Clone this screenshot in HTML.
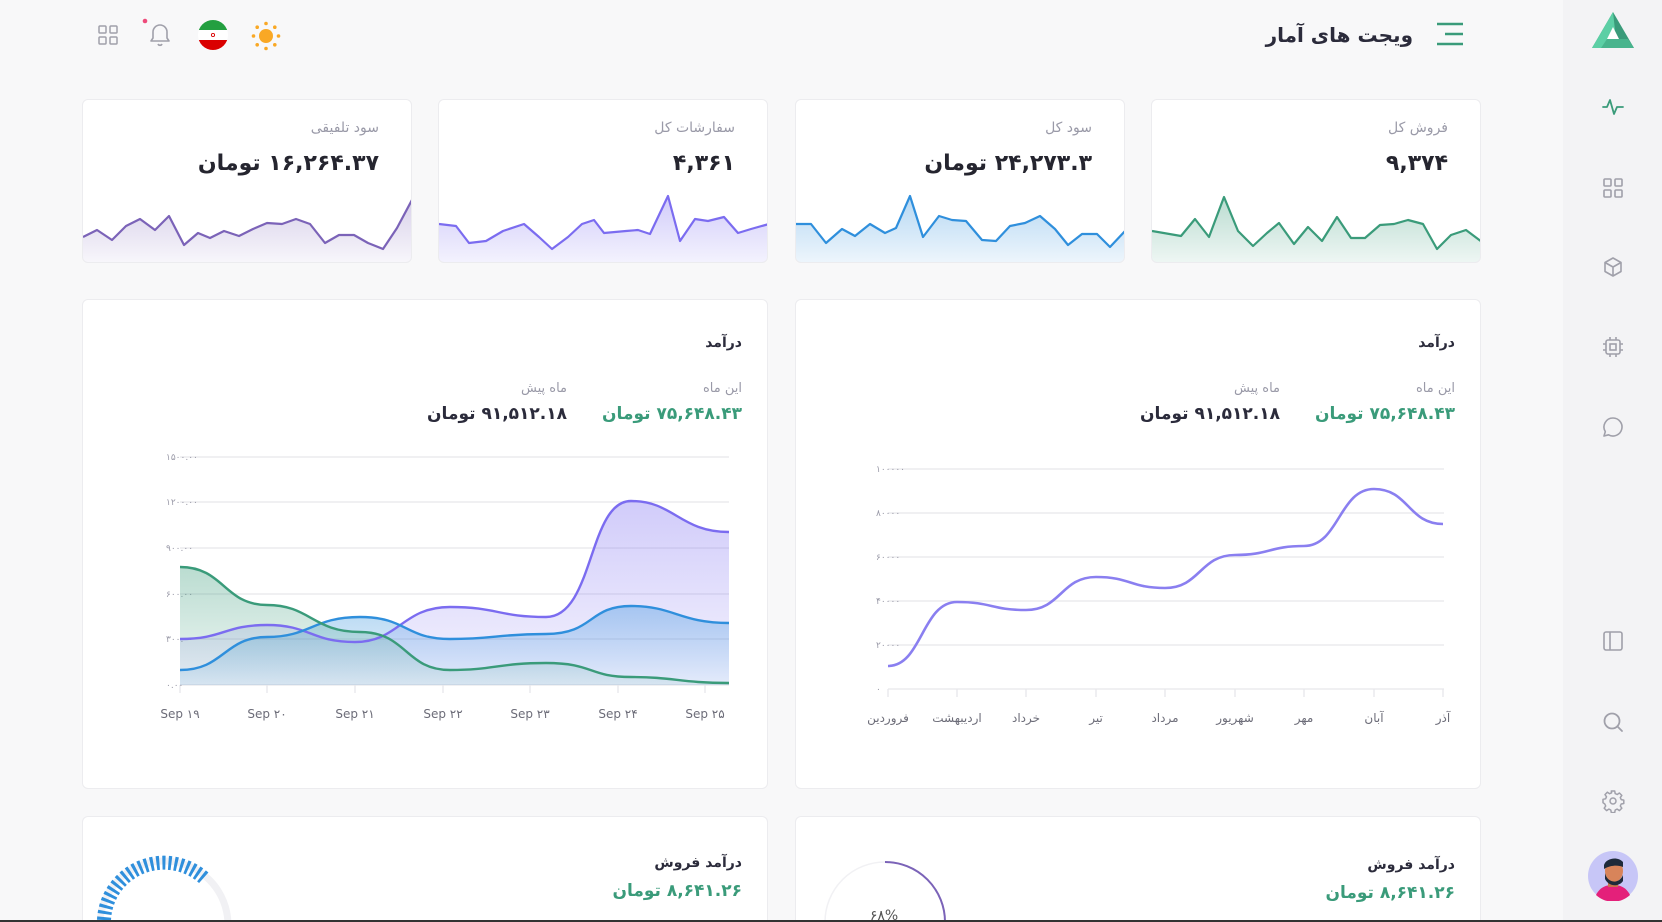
<!DOCTYPE html>
<html><head><meta charset="utf-8">
<style>
*{margin:0;padding:0;box-sizing:border-box}
html{width:1662px;height:922px;overflow:hidden}
body{width:1662px;height:922px;overflow:hidden;background:#f8f8f9;font-family:"DejaVu Sans","Liberation Sans",sans-serif;position:relative;color:#2b2b3b}
.a{position:absolute}
.t{direction:rtl;white-space:nowrap;position:absolute}
.card{position:absolute;background:#fff;border:1px solid #ececef;border-radius:6px;overflow:hidden}
.side{position:absolute;left:1563px;top:0;width:99px;height:922px;background:#f3f3f5}
.g{color:#9a9aa8;font-size:13px}
.v{font-size:22px;font-weight:bold;color:#25252f}
.gr{color:#3a9b7a}
</style></head><body>

<div class="side"></div>
<svg class="a" style="left:1591px;top:10px" width="44" height="40" viewBox="0 0 44 40">
<polygon points="22,2 43,38 1,38" fill="#3a9b7a"/>
<polygon points="22,2 1,38 14,38 24,20" fill="#5ccfa5"/>
<polygon points="10,38 43,38 37,29 16,29" fill="#48b48d"/>
<polygon points="22,17 28,29 16,29" fill="#fff"/>
</svg>
<svg class="a" style="left:1601px;top:95px" width="24" height="24" viewBox="0 0 24 24" fill="none" stroke="#3a9b7a" stroke-width="1.8" stroke-linecap="round" stroke-linejoin="round"><path d="M2 12h4l3-7 4 14 3-7h6"/></svg>
<svg class="a" style="left:1602px;top:177px" width="22" height="22" viewBox="0 0 22 22" fill="none" stroke="#a0a0aa" stroke-width="1.6"><rect x="2" y="2" width="7" height="7" rx="1"/><rect x="13" y="2" width="7" height="7" rx="1"/><rect x="2" y="13" width="7" height="7" rx="1"/><rect x="13" y="13" width="7" height="7" rx="1"/></svg>
<svg class="a" style="left:1602px;top:256px" width="22" height="22" viewBox="0 0 22 22" fill="none" stroke="#a0a0aa" stroke-width="1.6" stroke-linejoin="round"><path d="M11 2l8 4.5v9L11 20l-8-4.5v-9z M3 6.5l8 4.5 8-4.5 M11 11v9"/></svg>
<svg class="a" style="left:1601px;top:335px" width="24" height="24" viewBox="0 0 24 24" fill="none" stroke="#a0a0aa" stroke-width="1.6"><rect x="5" y="5" width="14" height="14" rx="2"/><rect x="9" y="9" width="6" height="6"/><path d="M9 2v3M15 2v3M9 19v3M15 19v3M2 9h3M2 15h3M19 9h3M19 15h3"/></svg>
<svg class="a" style="left:1602px;top:416px" width="22" height="22" viewBox="0 0 22 22" fill="none" stroke="#a0a0aa" stroke-width="1.6" stroke-linejoin="round"><path d="M11 2a9 9 0 1 1-4.5 16.8L2 20l1.3-4.3A9 9 0 0 1 11 2z"/></svg>
<svg class="a" style="left:1602px;top:630px" width="22" height="22" viewBox="0 0 22 22" fill="none" stroke="#a0a0aa" stroke-width="1.6"><rect x="2" y="2" width="18" height="18" rx="2"/><path d="M8 2v18"/></svg>
<svg class="a" style="left:1602px;top:711px" width="22" height="22" viewBox="0 0 22 22" fill="none" stroke="#a0a0aa" stroke-width="1.8" stroke-linecap="round"><circle cx="10" cy="10" r="7.5"/><path d="M15.5 15.5L20 20"/></svg>
<svg class="a" style="left:1601px;top:789px" width="24" height="24" viewBox="0 0 24 24" fill="none" stroke="#a0a0aa" stroke-width="1.5" stroke-linejoin="round"><circle cx="12" cy="12" r="3"/><path d="M10.3 2h3.4l.5 2.6 2 .9 2.2-1.5 2.4 2.4-1.5 2.2.9 2 2.6.5v3.4l-2.6.5-.9 2 1.5 2.2-2.4 2.4-2.2-1.5-2 .9-.5 2.6h-3.4l-.5-2.6-2-.9-2.2 1.5-2.4-2.4 1.5-2.2-.9-2L2 13.7v-3.4l2.6-.5.9-2L4 5.6 6.4 3.2l2.2 1.5 2-.9z"/></svg>
<svg class="a" style="left:1588px;top:851px" width="50" height="50" viewBox="0 0 50 50"><circle cx="25" cy="25" r="25" fill="#c7c6f7"/><path d="M8 44c4-8 10-10 17-10s13 2 17 10a25 25 0 0 1-34 0z" fill="#e4207a"/><rect x="20" y="26" width="10" height="10" fill="#c8714a"/><ellipse cx="26" cy="20" rx="9" ry="11" fill="#d8845a"/><path d="M16 14c2-7 14-9 19-3v5c-5-2-12-2-19 2z" fill="#1e2a3a"/><path d="M17 22c2 10 14 12 18 2v6c-4 6-14 6-18-2z" fill="#1e2a3a"/></svg>

<svg class="a" style="left:1437px;top:22px" width="26" height="24" viewBox="0 0 26 24" stroke="#3a9b7a" stroke-width="2.4"><path d="M0 2h26M8 12h18M0 22h26"/></svg>
<div class="t" style="right:249px;top:23px;font-size:20px;font-weight:bold;color:#2b2b3b">ویجت های آمار</div>

<svg class="a" style="left:98px;top:25px" width="20" height="20" viewBox="0 0 20 20" fill="none" stroke="#a0a0aa" stroke-width="1.5"><rect x="1" y="1" width="7" height="7" rx="1"/><rect x="12" y="1" width="7" height="7" rx="1"/><rect x="1" y="12" width="7" height="7" rx="1"/><rect x="12" y="12" width="7" height="7" rx="1"/></svg>
<svg class="a" style="left:140px;top:17px" width="32" height="32" viewBox="0 0 32 32" fill="none" stroke="#a0a0aa" stroke-width="1.6" stroke-linejoin="round"><circle cx="5" cy="4" r="2.3" fill="#ee4b7b" stroke="none"/><path d="M20 8a7 7 0 0 0-7 7v6l-2 3h18l-2-3v-6a7 7 0 0 0-7-7z M18 27a2.2 2.2 0 0 0 4 0"/></svg>
<svg class="a" style="left:198px;top:20px" width="30" height="30" viewBox="0 0 30 30"><clipPath id="fc"><circle cx="15" cy="15" r="15"/></clipPath><g clip-path="url(#fc)"><rect width="30" height="10" fill="#239f40"/><rect y="10" width="30" height="10" fill="#fff"/><rect y="20" width="30" height="10" fill="#da0000"/></g><circle cx="15" cy="15" r="1.6" fill="none" stroke="#da0000" stroke-width=".9"/></svg>
<svg class="a" style="left:251px;top:21px" width="30" height="30" viewBox="0 0 30 30" fill="#f9a825"><circle cx="15" cy="15" r="7"/><circle cx="15" cy="2.5" r="1.8"/><circle cx="15" cy="27.5" r="1.8"/><circle cx="2.5" cy="15" r="1.8"/><circle cx="27.5" cy="15" r="1.8"/><circle cx="6.2" cy="6.2" r="1.8"/><circle cx="23.8" cy="6.2" r="1.8"/><circle cx="6.2" cy="23.8" r="1.8"/><circle cx="23.8" cy="23.8" r="1.8"/></svg>

<svg width="0" height="0" style="position:absolute"><defs>
<linearGradient id="gp" x1="0" y1="0" x2="0" y2="1"><stop offset="0" stop-color="#7b63b8" stop-opacity=".3"/><stop offset="1" stop-color="#7b63b8" stop-opacity=".05"/></linearGradient>
<linearGradient id="gv" x1="0" y1="0" x2="0" y2="1"><stop offset="0" stop-color="#7b6cf0" stop-opacity=".35"/><stop offset="1" stop-color="#7b6cf0" stop-opacity=".08"/></linearGradient>
<linearGradient id="gb" x1="0" y1="0" x2="0" y2="1"><stop offset="0" stop-color="#2f8fdc" stop-opacity=".35"/><stop offset="1" stop-color="#2f8fdc" stop-opacity=".08"/></linearGradient>
<linearGradient id="gg" x1="0" y1="0" x2="0" y2="1"><stop offset="0" stop-color="#3a9b7a" stop-opacity=".35"/><stop offset="1" stop-color="#3a9b7a" stop-opacity=".08"/></linearGradient>
</defs></svg>

<div class="card" style="left:82px;top:99px;width:330px;height:164px">
<div class="t g" style="right:32px;top:20px;font-size:14px">سود تلفیقی</div>
<div class="t v" style="right:32px;top:51px">۱۶,۲۶۴.۳۷ تومان</div>
<svg class="a" style="left:0;top:0" width="330" height="164"><path d="M0 137L14 130 29 140 43 126 57 119 72 130 86 116 101 145 115 133 127 138 141 131 156 136 170 129 184 123 199 124 213 119 227 124 242 143 256 135 271 135 285 143 300 149 314 128 330 98V164H0Z" fill="url(#gp)"/><path d="M0 137L14 130 29 140 43 126 57 119 72 130 86 116 101 145 115 133 127 138 141 131 156 136 170 129 184 123 199 124 213 119 227 124 242 143 256 135 271 135 285 143 300 149 314 128 330 98" fill="none" stroke="#7b63b8" stroke-width="2.2" stroke-linejoin="round"/></svg>
</div>
<div class="card" style="left:438px;top:99px;width:330px;height:164px">
<div class="t g" style="right:32px;top:20px;font-size:14px">سفارشات کل</div>
<div class="t v" style="right:32px;top:51px">۴,۳۶۱</div>
<svg class="a" style="left:0;top:0" width="330" height="164"><path d="M0 124L17 126 30 143 47 141 64 131 85 124 100 137 113 149 129 137 143 124 155 120 165 133 187 131 199 130 211 134 229 96 241 141 256 119 269 121 285 117 299 133 312 129 330 124V164H0Z" fill="url(#gv)"/><path d="M0 124L17 126 30 143 47 141 64 131 85 124 100 137 113 149 129 137 143 124 155 120 165 133 187 131 199 130 211 134 229 96 241 141 256 119 269 121 285 117 299 133 312 129 330 124" fill="none" stroke="#7b6cf0" stroke-width="2.2" stroke-linejoin="round"/></svg>
</div>
<div class="card" style="left:795px;top:99px;width:330px;height:164px">
<div class="t g" style="right:32px;top:20px;font-size:14px">سود کل</div>
<div class="t v" style="right:32px;top:51px">۲۴,۲۷۳.۳ تومان</div>
<svg class="a" style="left:0;top:0" width="330" height="164"><path d="M0 124L15 124 30 143 46 129 59 136 74 124 89 133 100 128 114 96 127 137 143 116 156 120 170 121 186 140 200 141 214 126 229 123 244 116 259 129 272 145 286 134 301 134 314 147 330 130V164H0Z" fill="url(#gb)"/><path d="M0 124L15 124 30 143 46 129 59 136 74 124 89 133 100 128 114 96 127 137 143 116 156 120 170 121 186 140 200 141 214 126 229 123 244 116 259 129 272 145 286 134 301 134 314 147 330 130" fill="none" stroke="#2f8fdc" stroke-width="2.2" stroke-linejoin="round"/></svg>
</div>
<div class="card" style="left:1151px;top:99px;width:330px;height:164px">
<div class="t g" style="right:32px;top:20px;font-size:14px">فروش کل</div>
<div class="t v" style="right:32px;top:51px">۹,۳۷۴</div>
<svg class="a" style="left:0;top:0" width="330" height="164"><path d="M0 131L29 136 43 119 57 137 72 97 86 131 101 146 115 133 127 123 142 144 156 127 170 141 185 117 199 138 213 138 228 125 242 124 256 120 271 124 285 149 299 135 314 130 330 142V164H0Z" fill="url(#gg)"/><path d="M0 131L29 136 43 119 57 137 72 97 86 131 101 146 115 133 127 123 142 144 156 127 170 141 185 117 199 138 213 138 228 125 242 124 256 120 271 124 285 149 299 135 314 130 330 142" fill="none" stroke="#3a9b7a" stroke-width="2.2" stroke-linejoin="round"/></svg>
</div>

<div class="card" style="left:82px;top:299px;width:686px;height:490px"></div>
<div class="card" style="left:795px;top:299px;width:686px;height:490px"></div>

<div class="t" style="right:920px;top:335px;font-size:14px;font-weight:bold">درآمد</div>
<div class="t g" style="right:920px;top:381px">این ماه</div>
<div class="t gr" style="right:920px;top:404px;font-size:17px;font-weight:bold">۷۵,۶۴۸.۴۳ تومان</div>
<div class="t g" style="right:1095px;top:381px">ماه پیش</div>
<div class="t" style="right:1095px;top:404px;font-size:17px;font-weight:bold">۹۱,۵۱۲.۱۸ تومان</div>

<div class="t" style="right:207px;top:335px;font-size:14px;font-weight:bold">درآمد</div>
<div class="t g" style="right:207px;top:381px">این ماه</div>
<div class="t gr" style="right:207px;top:404px;font-size:17px;font-weight:bold">۷۵,۶۴۸.۴۳ تومان</div>
<div class="t g" style="right:382px;top:381px">ماه پیش</div>
<div class="t" style="right:382px;top:404px;font-size:17px;font-weight:bold">۹۱,۵۱۲.۱۸ تومان</div>

<svg class="a" style="left:0;top:0" width="1662" height="922" font-family="DejaVu Sans, sans-serif">
<g stroke="#e6e6ea" stroke-width="1.3">
<path d="M180 457H729M180 502H729M180 548H729M180 594H729M180 639H729M180 685H729"/>
<path d="M180 685v8M267 685v8M355 685v8M443 685v8M530 685v8M618 685v8M705 685v8"/>
<path d="M888 469H1444M888 513H1444M888 557H1444M888 601H1444M888 645H1444M888 689H1444"/>
<path d="M888 689v8M957 689v8M1026 689v8M1096 689v8M1165 689v8M1235 689v8M1304 689v8M1374 689v8M1443 689v8"/>
</g>
<g fill="#9a9aa8" font-size="9">
<text x="166" y="460">۱۵۰۰.۰۰</text><text x="166" y="505">۱۲۰۰.۰۰</text><text x="166" y="551">۹۰۰.۰۰</text><text x="166" y="597">۶۰۰.۰۰</text><text x="166" y="642">۳۰۰.۰۰</text><text x="166" y="688">۰.۰۰</text>
<text x="876" y="472">۱۰۰۰۰۰</text><text x="876" y="516">۸۰۰۰۰</text><text x="876" y="560">۶۰۰۰۰</text><text x="876" y="604">۴۰۰۰۰</text><text x="876" y="648">۲۰۰۰۰</text><text x="876" y="692">۰</text>
</g>
<g fill="#6c6c78" font-size="12" text-anchor="middle">
<text x="180" y="718">Sep ۱۹</text><text x="267" y="718">Sep ۲۰</text><text x="355" y="718">Sep ۲۱</text><text x="443" y="718">Sep ۲۲</text><text x="530" y="718">Sep ۲۳</text><text x="618" y="718">Sep ۲۴</text><text x="705" y="718">Sep ۲۵</text>
<text x="888" y="722">فروردین</text><text x="957" y="722">اردیبهشت</text><text x="1026" y="722">خرداد</text><text x="1096" y="722">تیر</text><text x="1165" y="722">مرداد</text><text x="1235" y="722">شهریور</text><text x="1304" y="722">مهر</text><text x="1374" y="722">آبان</text><text x="1443" y="722">آذر</text>
</g>
<path d="M180 639C224 639 224 625 267 625S311 642 355 642 402 607 450 607 498 617 546 617 588 501 631 501 680 532 729 532V685H180Z" fill="url(#gv)"/>
<path d="M180 670C224 670 224 637 267 637S313 617 360 617 405 639 450 639 498 634 546 634 588 606 631 606 680 623 729 623V685H180Z" fill="url(#gb)"/>
<path d="M180 567C224 567 224 605 267 605S313 632 360 632 405 670 450 670 498 663 546 663 588 677 631 677 680 683 729 683V685H180Z" fill="url(#gg)"/>
<g fill="none" stroke-width="2.4">
<path d="M180 639C224 639 224 625 267 625S311 642 355 642 402 607 450 607 498 617 546 617 588 501 631 501 680 532 729 532" stroke="#7b6cf0"/>
<path d="M180 670C224 670 224 637 267 637S313 617 360 617 405 639 450 639 498 634 546 634 588 606 631 606 680 623 729 623" stroke="#2f8fdc"/>
<path d="M180 567C224 567 224 605 267 605S313 632 360 632 405 670 450 670 498 663 546 663 588 677 631 677 680 683 729 683" stroke="#3a9b7a"/>
<path d="M888 666C922 666 922 602 957 602S991 610 1026 610 1061 577 1096 577 1130 588 1165 588 1200 555 1235 555 1269 546 1304 546 1339 489 1374 489 1408 524 1443 524" stroke="#8a7ff0" stroke-width="2.6"/>
</g>
</svg>

<div class="card" style="left:82px;top:816px;width:686px;height:106px;border-bottom:none;border-radius:6px 6px 0 0"></div>
<div class="card" style="left:795px;top:816px;width:686px;height:106px;border-bottom:none;border-radius:6px 6px 0 0"></div>
<div class="t" style="right:920px;top:855px;font-size:14px;font-weight:bold">درآمد فروش</div>
<div class="t gr" style="right:920px;top:881px;font-size:17px;font-weight:bold">۸,۶۴۱.۲۶ تومان</div>
<div class="t" style="right:207px;top:857px;font-size:14px;font-weight:bold">درآمد فروش</div>
<div class="t gr" style="right:207px;top:883px;font-size:17px;font-weight:bold">۸,۶۴۱.۲۶ تومان</div>
<svg class="a" style="left:0;top:0" width="1662" height="922">
<circle cx="164" cy="925" r="64" fill="none" stroke="#f1f1f4" stroke-width="7"/>
<path d="M104 920A60 60 0 0 1 204 878" fill="none" stroke="#2f8fdc" stroke-width="14" stroke-dasharray="3 3"/>
<circle cx="885" cy="922" r="60" fill="none" stroke="#f1f1f4" stroke-width="1.5"/>
<path d="M885 862A60 60 0 0 1 945 922" fill="none" stroke="#7b63b8" stroke-width="2"/>
<text x="884" y="920" font-size="14" fill="#555" text-anchor="middle" font-family="DejaVu Sans">۶۸%</text>
</svg>
<div class="a" style="left:0;top:920px;width:1662px;height:2px;background:#333"></div>
</body></html>
